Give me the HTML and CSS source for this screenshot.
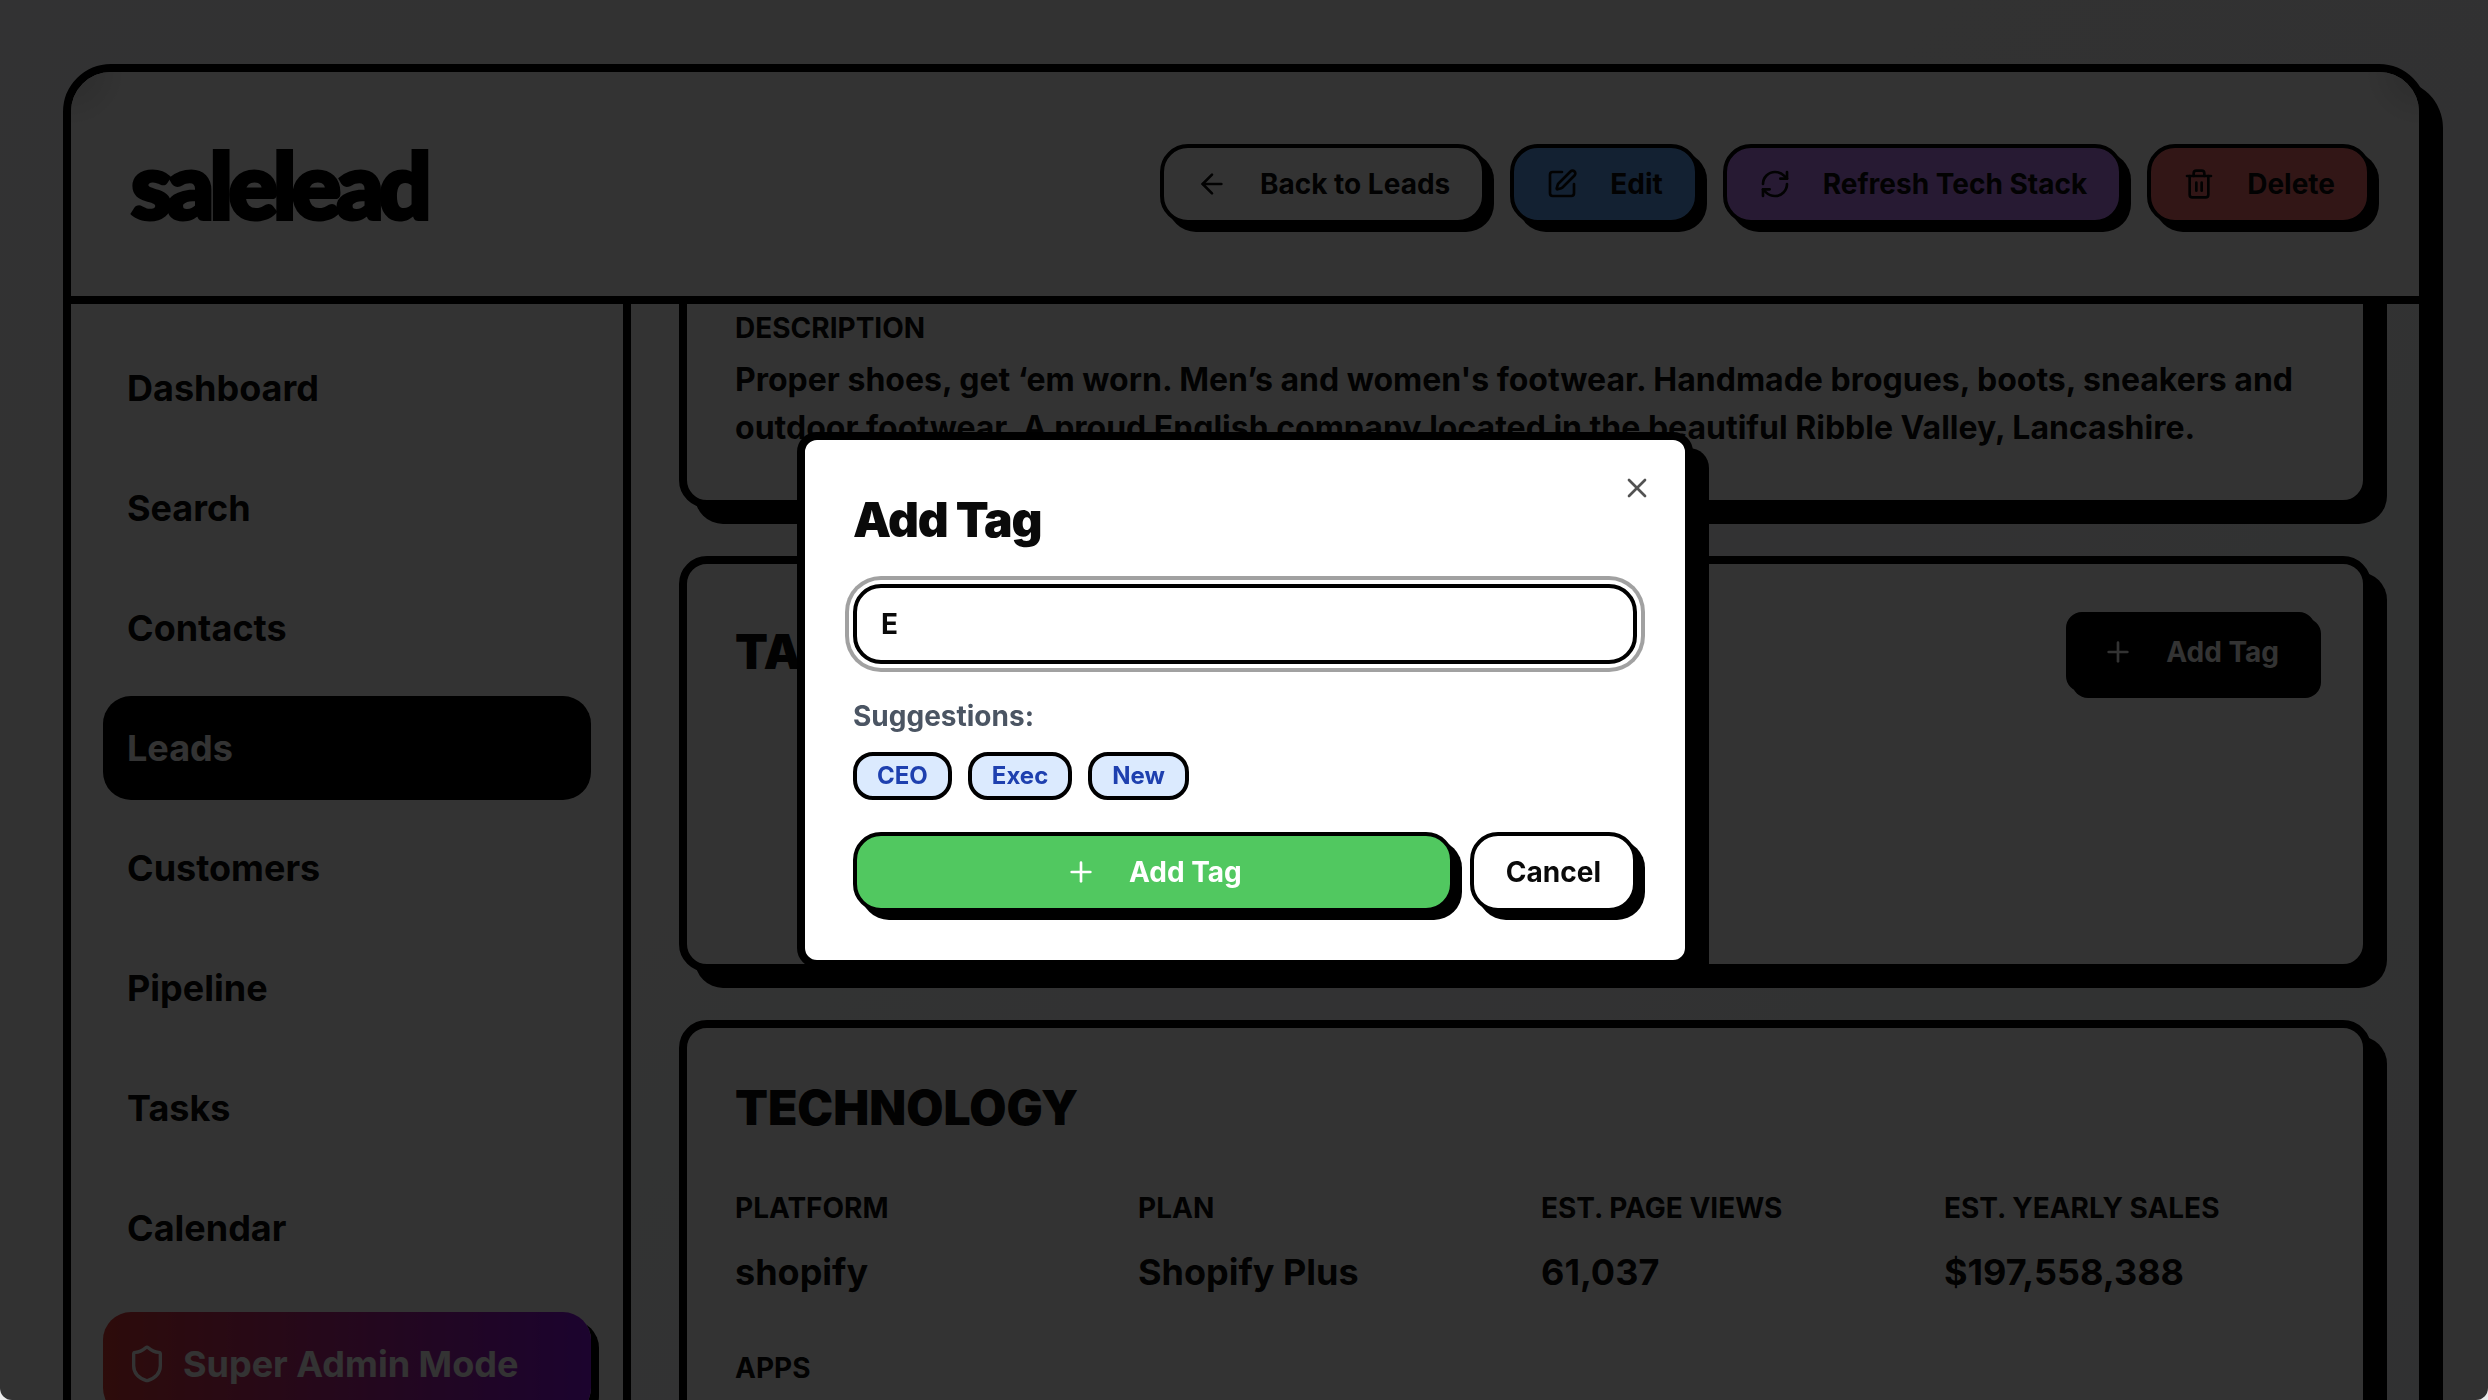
FILE: index.html
```html
<!DOCTYPE html>
<html lang="en">
<head>
    <meta charset="UTF-8">
    <title>salelead</title>
    <meta name="viewport" content="width=device-width, initial-scale=1.0">
    <link rel="stylesheet" href="styles.css">
</head>
<body>
    <div class="page">
        <div class="frame">
            <header class="header">
                <a href="#" class="logo">salelead</a>
                <div class="actions">
                    <button class="btn">
                        <svg class="icon" viewBox="0 0 24 24"><path d="m12 19-7-7 7-7"/><path d="M19 12H5"/></svg>
                        Back to Leads
                    </button>
                    <button class="btn btn-blue">
                        <svg class="icon" viewBox="0 0 24 24"><path d="M12 3H5a2 2 0 0 0-2 2v14a2 2 0 0 0 2 2h14a2 2 0 0 0 2-2v-7"/><path d="M18.375 2.625a1 1 0 0 1 3 3l-9.013 9.014a2 2 0 0 1-.853.505l-2.873.84a.5.5 0 0 1-.62-.62l.84-2.873a2 2 0 0 1 .506-.852z"/></svg>
                        Edit
                    </button>
                    <button class="btn btn-purple">
                        <svg class="icon" viewBox="0 0 24 24"><path d="M3 12a9 9 0 0 1 9-9 9.75 9.75 0 0 1 6.74 2.74L21 8"/><path d="M21 3v5h-5"/><path d="M21 12a9 9 0 0 1-9 9 9.75 9.75 0 0 1-6.74-2.74L3 16"/><path d="M8 16H3v5"/></svg>
                        Refresh Tech Stack
                    </button>
                    <button class="btn btn-red">
                        <svg class="icon" viewBox="0 0 24 24"><path d="M3 6h18"/><path d="M19 6v14a2 2 0 0 1-2 2H7a2 2 0 0 1-2-2V6"/><path d="M8 6V4a2 2 0 0 1 2-2h4a2 2 0 0 1 2 2v2"/><path d="M10 11v6"/><path d="M14 11v6"/></svg>
                        Delete
                    </button>
                </div>
            </header>
            <div class="body">
                <nav class="sidebar">
                    <a href="#" class="nav-link">Dashboard</a>
                    <a href="#" class="nav-link">Search</a>
                    <a href="#" class="nav-link">Contacts</a>
                    <a href="#" class="nav-link active">Leads</a>
                    <a href="#" class="nav-link">Customers</a>
                    <a href="#" class="nav-link">Pipeline</a>
                    <a href="#" class="nav-link">Tasks</a>
                    <a href="#" class="nav-link">Calendar</a>
                    <a href="#" class="nav-link admin-link">
                        <svg class="icon icon-lg" viewBox="0 0 24 24"><path d="M20 13c0 5-3.5 7.5-7.66 8.95a1 1 0 0 1-.67-.01C7.5 20.5 4 18 4 13V6a1 1 0 0 1 1-1c2 0 4.5-1.2 6.24-2.72a1.17 1.17 0 0 1 1.52 0C14.51 3.81 17 5 19 5a1 1 0 0 1 1 1z"/></svg>
                        Super Admin Mode
                    </a>
                </nav>
                <main class="main">
                    <div class="content">
                        <section class="card">
                            <h3 class="label">DESCRIPTION</h3>
                            <p class="description">Proper shoes, get ‘em worn. Men’s and women's footwear. Handmade brogues, boots, sneakers and outdoor footwear. A proud English company located in the beautiful Ribble Valley, Lancashire.</p>
                        </section>
                        <section class="card tags-card">
                            <div class="card-header">
                                <h2 class="title">TAGS</h2>
                                <button class="btn btn-dark">
                                    <svg class="icon" viewBox="0 0 24 24"><path d="M5 12h14"/><path d="M12 5v14"/></svg>
                                    Add Tag
                                </button>
                            </div>
                        </section>
                        <section class="card">
                            <h2 class="title">TECHNOLOGY</h2>
                            <dl class="stats">
                                <div>
                                    <dt class="label">PLATFORM</dt>
                                    <dd class="value">shopify</dd>
                                </div>
                                <div>
                                    <dt class="label">PLAN</dt>
                                    <dd class="value">Shopify Plus</dd>
                                </div>
                                <div>
                                    <dt class="label">EST. PAGE VIEWS</dt>
                                    <dd class="value">61,037</dd>
                                </div>
                                <div>
                                    <dt class="label">EST. YEARLY SALES</dt>
                                    <dd class="value">$197,558,388</dd>
                                </div>
                            </dl>
                            <h3 class="label">APPS</h3>
                        </section>
                    </div>
                </main>
            </div>
        </div>
    </div>

    <div class="overlay">
        <form class="modal" role="dialog" aria-labelledby="modalTitle">
            <button type="button" class="close" aria-label="Close">
                <svg class="icon" viewBox="0 0 24 24"><path d="M18 6 6 18"/><path d="m6 6 12 12"/></svg>
            </button>
            <h2 class="title modal-title" id="modalTitle"><label for="tagInput">Add Tag</label></h2>
            <input type="text" id="tagInput" class="tag-input" value="E">
            <p class="suggestions-label">Suggestions:</p>
            <div class="chips">
                <button type="button" class="chip">CEO</button>
                <button type="button" class="chip">Exec</button>
                <button type="button" class="chip">New</button>
            </div>
            <div class="modal-actions">
                <button type="button" class="btn btn-green">
                    <svg class="icon" viewBox="0 0 24 24"><path d="M5 12h14"/><path d="M12 5v14"/></svg>
                    Add Tag
                </button>
                <button type="button" class="btn">Cancel</button>
            </div>
        </form>
    </div>
</body>
</html>
```
FILE: styles.css
```css
* { margin: 0; padding: 0; box-sizing: border-box; }
body {
    font-family: 'Inter', sans-serif;
    font-size: 28px;
    line-height: 40px;
    color: #0a0a0a;
    background: #ebebeb;
    height: 100vh;
    overflow: hidden;
}
button, input { font: inherit; color: inherit; }
a { color: inherit; text-decoration: none; }

.page {
    height: 100vh;
    padding: 64px 61px 0 63px;
    border-radius: 0 0 12px 12px;
    overflow: hidden;
    background: linear-gradient(135deg, #fafafc 0%, #f4f4f5 100%);
}
.frame {
    height: 100vh;
    display: flex;
    flex-direction: column;
    background: #fff;
    border: 8px solid #000;
    border-radius: 48px;
    box-shadow: 16px 16px 0 #000;
    overflow: hidden;
}
.header {
    display: flex;
    align-items: center;
    justify-content: space-between;
    flex-shrink: 0;
    height: 232px;
    padding: 0 48px 0 60px;
    border-bottom: 8px solid #000;
    background:
        radial-gradient(circle at 0 0, #dcdcdc 0, transparent 56px),
        radial-gradient(circle at 100% 0, #dcdcdc 0, transparent 56px),
        #fff;
}
.logo {
    font-family: 'Lato', sans-serif;
    font-size: 92px;
    line-height: 96px;
    font-weight: 900;
    letter-spacing: -0.05em;
    -webkit-text-stroke: 4px #000;
    color: #000;
}
.actions { display: flex; gap: 24px; }

.btn {
    display: flex;
    align-items: center;
    justify-content: center;
    gap: 32px;
    height: 80px;
    padding: 0 32px;
    border: 4px solid #000;
    border-radius: 28px;
    background: #fff;
    box-shadow: 8px 8px 0 #000;
    font-weight: 700;
    white-space: nowrap;
    cursor: pointer;
}
.btn-blue { background: #60a5fa; }
.btn-purple { background: #c084fc; }
.btn-red { background: #f87171; }
.btn-dark {
    background: #000;
    color: #fff;
    border-radius: 16px;
    box-shadow: 6px 6px 0 #000;
}
.btn-green { background: #51c860; color: #fff; flex: 1; }

.icon {
    width: 32px; height: 32px;
    flex-shrink: 0;
    fill: none;
    stroke: currentColor;
    stroke-width: 2;
    stroke-linecap: round;
    stroke-linejoin: round;
}
.icon-lg { width: 40px; height: 40px; }

.body { display: flex; flex: 1; min-height: 0; }
.sidebar {
    display: flex;
    flex-direction: column;
    gap: 16px;
    flex: 0 0 560px;
    padding: 32px;
    border-right: 8px solid #000;
    background: #fff;
}
.nav-link {
    display: flex;
    align-items: center;
    gap: 16px;
    flex-shrink: 0;
    height: 104px;
    padding: 0 24px;
    border-radius: 28px;
    font-size: 36px;
    font-weight: 700;
}
.nav-link.active { background: #000; color: #fff; }
.admin-link {
    margin-top: 16px;
    background: linear-gradient(90deg, #e03c36, #8a14e6);
    box-shadow: 8px 8px 0 #000;
    color: #fff;
}

.main {
    flex: 1;
    min-width: 0;
    overflow: hidden;
    background: linear-gradient(135deg, #ffffff 0%, #f8fafc 50%, #f1f5f9 100%);
}
/* scrolled part way down the lead */
.content {
    display: flex;
    flex-direction: column;
    gap: 48px;
    margin-top: -100px;
    padding: 48px;
}
.card {
    padding: 48px;
    border: 8px solid #000;
    border-radius: 28px;
    background: #fff;
    box-shadow: 16px 16px 0 #000;
}
.tags-card { min-height: 416px; }
.card-header { display: flex; align-items: center; justify-content: space-between; }
.title {
    font-size: 48px;
    line-height: 64px;
    font-weight: 900;
}
.label { font-size: 28px; line-height: 40px; font-weight: 700; }
.description { margin-top: 8px; font-size: 32px; line-height: 48px; font-weight: 700; }
.stats {
    display: grid;
    grid-template-columns: repeat(4, 1fr);
    gap: 32px;
    margin: 48px 0;
}
.value { margin-top: 16px; font-size: 36px; line-height: 56px; font-weight: 700; }

.overlay {
    position: fixed; top: 0; left: 0; width: 100%; height: 100%;
    display: flex;
    align-items: center;
    justify-content: center;
    padding-left: 2px;
    border-radius: 0 0 12px 12px;
    background: rgba(0, 0, 0, 0.8);
}
.modal {
    position: relative;
    width: 896px;
    padding: 48px;
    border: 8px solid #000;
    border-radius: 20px;
    background: #fff;
    box-shadow: 16px 16px 0 #000;
}
.modal-title { letter-spacing: -0.025em; }
.close {
    position: absolute; top: 32px; right: 32px;
    display: flex;
    border: none;
    background: none;
    opacity: 0.7;
    cursor: pointer;
}
.tag-input {
    display: block;
    width: 100%;
    height: 80px;
    margin-top: 32px;
    padding: 0 24px;
    border: 4px solid #000;
    border-radius: 28px;
    outline: none;
    font-weight: 700;
    box-shadow: 0 0 0 4px #fff, 0 0 0 8px #a1a1a1;
}
.suggestions-label { margin-top: 32px; font-weight: 700; color: #4b5563; }
.chips { display: flex; gap: 16px; margin-top: 16px; }
.chip {
    height: 48px;
    padding: 0 20px;
    border: 4px solid #000;
    border-radius: 20px;
    background: #dbeafe;
    color: #1e40af;
    font-size: 24px;
    line-height: 32px;
    font-weight: 700;
    cursor: pointer;
}
.modal-actions { display: flex; gap: 16px; margin-top: 32px; }
```
